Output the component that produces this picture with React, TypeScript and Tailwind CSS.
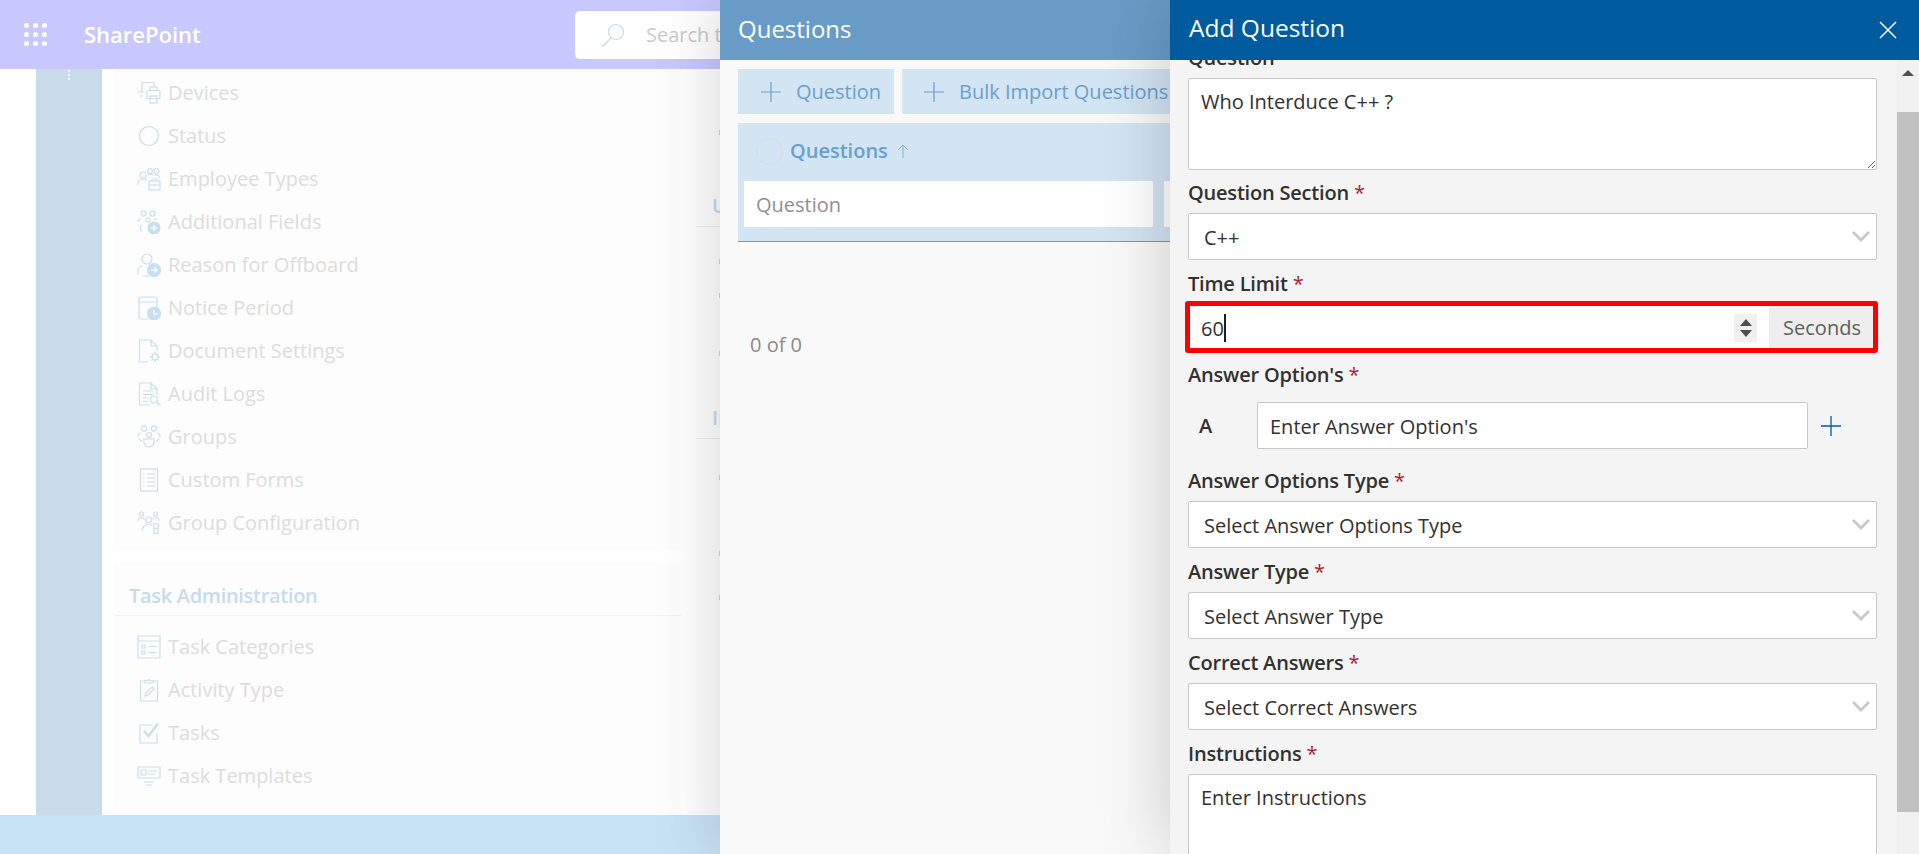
import type { ReactNode } from 'react';

const font = { fontFamily: '"Open Sans", "Noto Sans", sans-serif' };

function Icon({ children }: { children: ReactNode }) {
  return (
    <svg viewBox="0 0 24 24" className="h-6 w-6 shrink-0" fill="none" stroke="#c9deef" strokeWidth="1.2">
      {children}
    </svg>
  );
}

const firstGroup: [string, ReactNode][] = [
  ['Devices', <Icon><path d="M1 11h7M5 11V2.500a1 1 0 0 1 1-1h10a1 1 0 0 1 1 1V6M6 15H3" /><rect x="10" y="9.500" width="13" height="8" rx="1" /><rect x="13" y="6" width="7" height="3.500" /><rect x="13" y="15" width="7" height="7" /></Icon>],
  ['Status', <Icon><circle cx="12" cy="12" r="9.500" /></Icon>],
  ['Employee Types', <Icon><circle cx="6" cy="8" r="3" /><circle cx="13" cy="4" r="2.400" /><circle cx="19.500" cy="4" r="2.400" /><path d="M1 18c0-4 2-6 5-6 2 0 3 .7 3.500 2M11 8c1-1 4-1 5 0M17 8c2-.6 5 0 6 3" /><rect x="12" y="14" width="11" height="9" /><path d="M15 14v-2h5v2M12 18h11M17.500 17v2" /></Icon>],
  ['Additional Fields', <Icon><circle cx="6.500" cy="3.500" r="2.600" /><circle cx="15.500" cy="3.500" r="2.600" /><circle cx="11" cy="10" r="2.200" /><path d="M1 12c0-2 1.500-3 3-3M17 9h3M5 21c-2-2-2-4-1-6" /><circle cx="17" cy="18" r="6" fill="#c9deef" /><path d="M17 15v6M14 18h6" stroke="#fdfdfd" strokeWidth="1.500" /></Icon>],
  ['Reason for Offboard', <Icon><circle cx="10" cy="6" r="5" /><path d="M1 22c-1-5 1-9 5-9.500M6 23h6" /><circle cx="17" cy="17" r="6.500" fill="#c9deef" /><path d="M14 17h6M17.500 14.500 20 17l-2.500 2.500" stroke="#fdfdfd" strokeWidth="1.300" /></Icon>],
  ['Notice Period', <Icon><path d="M11 23H4a2 2 0 0 1-2-2V3a2 2 0 0 1 2-2h14a2 2 0 0 1 2 2v8M2 6h18" /><circle cx="17" cy="17.500" r="6.500" fill="#c9deef" /><path d="M17 14v4h3.500" stroke="#fdfdfd" strokeWidth="1.300" /></Icon>],
  ['Document Settings', <Icon><path d="M11 23H2.500V1H14l6 6v5M14 1v6h6" /><circle cx="18" cy="18" r="3" /><path d="M18 13v2M18 21v2M13 18h2M21 18h2M14.500 14.500l1.400 1.400M20 20l1.500 1.500M21.500 14.500 20 16M16 20l-1.500 1.500" /></Icon>],
  ['Audit Logs', <Icon><path d="M12 23H2.500V1H14l6 6v6M14 1v6h6M6 9h10M6 12.500h10M6 16h5M6 19.500h5" /><circle cx="17" cy="17.500" r="3.500" /><path d="m19.500 20 4 3.500" /></Icon>],
  ['Groups', <Icon><circle cx="7" cy="3.500" r="2.600" /><circle cx="17" cy="3.500" r="2.600" /><circle cx="12" cy="10" r="2.500" /><path d="M1 12c0-2 1-4 3-4M23 12c0-2-1-4-3-4M2 13c.5 2 1.500 3 3 3.500M22 13c-.5 2-1.500 3-3 3.500M7 14h10v3a5 5 0 0 1-10 0z" /></Icon>],
  ['Custom Forms', <Icon><rect x="3.500" y="1" width="17" height="22" /><path d="M6 6h1.500M10 6h8M6 10h1.500M10 10h8M6 14h1.500M10 14h8M6 18h1.500M10 18h8" /></Icon>],
  ['Group Configuration', <Icon><circle cx="4.500" cy="3" r="2" /><circle cx="18.500" cy="3" r="2" /><circle cx="11.500" cy="9" r="3" /><path d="M1 10c0-2 1.500-3.500 3.500-3.500 1.500 0 2.500 1 3 2M22 10c0-2-1.500-3.500-3.500-3.500-1.500 0-2.500 1-3 2M5 20c0-4 3-6.500 6.500-6.500 1.500 0 2.500.4 3.500 1" /><circle cx="19" cy="15" r="2.500" /><path d="M17 17v6l2-1.500 2 1.500v-6" /></Icon>],
];

const secondGroup: [string, ReactNode][] = [
  ['Task Categories', <Icon><path d="M1 1h22v22H1zM1 6h22M5 10h3v3H5zM5 16h3v3H5zM11 11.500h9M11 17.500h9" /></Icon>],
  ['Activity Type', <Icon><path d="M8 3H3.500v20h17V3H16" /><path d="M8 5V2.500h3a1 1 0 0 1 2 0h3V5z" /><path d="m8 18 1-3 6-6 2 2-6 6z" /></Icon>],
  ['Tasks', <Icon><path d="M20 12v10H3V4h13" /><path d="m7 10 4.500 5L21 2.500" strokeWidth="2.600" /></Icon>],
  ['Task Templates', <Icon><path d="M1 3h22v11H1zM7 18h10M9 21h6" /><path d="M4 6h5v5H4zM11 7h9M11 10h7" /></Icon>],
];

function NavRow({ label, icon }: { label: string; icon: ReactNode }) {
  return (
    <div className="flex h-[43px] items-center gap-[7px] pl-[23px] text-[20px] text-[#dcdcdc]">
      {icon}
      <span>{label}</span>
    </div>
  );
}

function Tick({ className }: { className: string }) {
  return <div className={`h-[5px] w-px bg-[#d4d4d4] ${className}`} />;
}

function Backdrop() {
  return (
    <div className="flex h-full w-[720px] shrink-0 flex-col overflow-hidden bg-white">
      <header className="flex h-[69px] shrink-0 items-center bg-[#c8c8fe] pl-[24px]">
        <div className="grid w-[23px] shrink-0 grid-cols-3 gap-[4px]">
          {Array.from({ length: 9 }).map((_, i) => (
            <span key={i} className="h-[5px] w-[5px] rounded-full bg-white" />
          ))}
        </div>
        <span className="ml-[37px] w-[118px] shrink-0 text-[22px] font-semibold whitespace-nowrap text-white">SharePoint</span>
        <div className="ml-[373px] flex h-[48px] w-[300px] shrink-0 items-center rounded-[5px] bg-white pl-[26px] text-[20px] whitespace-nowrap text-[#c9c9c9]">
          <svg viewBox="0 0 24 24" className="h-6 w-6 shrink-0" fill="none" stroke="#c4daee" strokeWidth="1.200">
            <circle cx="15" cy="9" r="7.500" />
            <path d="M10 15 1 24" />
          </svg>
          <span className="ml-[21px]">Search this</span>
        </div>
      </header>

      <div className="flex min-h-0 flex-1">
        <div className="w-9 shrink-0 bg-white" />
        <aside className="flex w-[66px] shrink-0 flex-col items-center gap-[2px] bg-[#c7dbeb] pt-[1px]">
          <span className="h-[2px] w-[2px] bg-white" />
          <span className="h-[2px] w-[2px] bg-white" />
          <span className="h-[2px] w-[2px] bg-white" />
        </aside>
        <div className="w-3 shrink-0 bg-white" />

        <div className="flex w-[567px] shrink-0 flex-col">
          <div className="h-[481px] bg-[#fdfdfd] pt-[2px]">
            {firstGroup.map(([label, icon]) => (
              <NavRow key={label} label={label} icon={icon} />
            ))}
          </div>
          <div className="h-[13px] bg-white" />
          <div className="flex-1 bg-[#fdfdfd]">
            <div className="border-b border-[#f1f1f1] pt-[21px] pb-[7px] pl-[15px] text-[20px] leading-6 font-semibold tracking-[-0.015em] text-[#c7dbed]">
              Task Administration
            </div>
            <div className="pt-[9px]">
              {secondGroup.map(([label, icon]) => (
                <NavRow key={label} label={label} icon={icon} />
              ))}
            </div>
          </div>
        </div>

        <div className="ml-[15px] w-6 shrink-0 overflow-hidden whitespace-nowrap">
          <Tick className="mt-[61px] ml-[23px]" />
          <div className="mt-[59px] border-b border-[#eeeeee] pb-[8px] pl-[16px] text-[20px] leading-6 font-semibold text-[#c7dbed]">
            Users
          </div>
          <Tick className="mt-[32px] ml-[23px]" />
          <Tick className="mt-[29px] ml-[23px]" />
          <Tick className="mt-[53px] ml-[23px]" />
          <div className="mt-[50px] border-b border-[#eeeeee] pb-[8px] pl-[16px] text-[20px] leading-6 font-semibold text-[#c7dbed]">
            Integrations
          </div>
          <Tick className="mt-[36px] ml-[23px]" />
          <Tick className="mt-[71px] ml-[23px]" />
          <Tick className="mt-[39px] ml-[23px]" />
        </div>
      </div>

      <footer className="h-[39px] shrink-0 bg-[#c7e2f5]" />
    </div>
  );
}

function PlusLabel({ label, className }: { label: string; className: string }) {
  return (
    <div className={`flex h-[45px] shrink-0 items-center bg-[#d3e4f3] text-[20px] text-[#6a9fcb] ${className}`}>
      <svg viewBox="0 0 20 20" className="h-5 w-5 shrink-0" stroke="#6a9fcb" strokeWidth="1.200">
        <path d="M10 0v20M0 10h20" />
      </svg>
      <span className="ml-[15px] whitespace-nowrap">{label}</span>
    </div>
  );
}

function QuestionsPanel() {
  return (
    <section className="relative z-10 flex h-full w-[450px] shrink-0 flex-col overflow-hidden bg-[#f9f9f9] shadow-[0_0_60px_rgba(0,0,0,0.18)]">
      <div className="flex h-[60px] shrink-0 items-center bg-[#689cc7] pb-[3px] pl-[18px] text-[24px] text-white">
        Questions
      </div>
      <div className="flex gap-2 pt-[9px] pl-[18px]">
        <PlusLabel label="Question" className="w-[156px] pl-[23px]" />
        <PlusLabel label="Bulk Import Questions" className="w-[300px] pl-[22px]" />
      </div>
      <div className="mt-[9px] ml-[18px] h-[119px] w-[440px] shrink-0 border-b border-[#6a9ec8] bg-[#d3e4f3]">
        <div className="flex h-[56px] items-center pl-[18px]">
          <span className="h-[27px] w-[27px] shrink-0 rounded-full border border-[#dedcda]" />
          <span className="ml-[7px] text-[20px] font-semibold text-[#6a9fcb]">Questions</span>
          <svg viewBox="0 0 12 14" className="ml-[9px] h-[14px] w-3" fill="none" stroke="#86afd2" strokeWidth="1">
            <path d="M6 14V1M1 6l5-5 5 5" />
          </svg>
        </div>
        <div className="mt-[2px] flex gap-[11px] pl-[6px]">
          <div className="flex h-[46px] w-[409px] shrink-0 items-center bg-white pt-[2px] pl-3 text-[20px] text-[#8f8f8f]">
            Question
          </div>
          <div className="h-[46px] w-[40px] shrink-0 bg-white" />
        </div>
      </div>
      <div className="mt-[88px] pl-[30px] text-[20px] text-[#8a8a8a]">0 of 0</div>
    </section>
  );
}

function Label({ children }: { children: ReactNode }) {
  return (
    <div className="mb-[7px] h-[26px] text-[20px] leading-[26px] font-semibold tracking-[-0.01em] whitespace-nowrap text-[#323130]">
      {children} <span className="font-normal text-[#a4262c]">*</span>
    </div>
  );
}

function SelectBox({ value }: { value: string }) {
  return (
    <div className="relative flex h-[47px] items-center rounded-[2px] border border-[#c8c8c8] bg-white pt-[3px] pl-[15px] text-[20px] text-[#323130]">
      <span>{value}</span>
      <svg viewBox="0 0 18 11" className="absolute top-[17px] right-[6px] h-[11px] w-[18px]" fill="none" stroke="#c8c8c8" strokeWidth="2.800">
        <path d="m1 1 8 8 8-8" />
      </svg>
    </div>
  );
}

function AddQuestionPanel() {
  const areaClass =
    'block w-full rounded-[2px] border border-[#c8c8c8] bg-white px-3 pt-[10px] text-[20px] leading-[26px] text-[#323130] outline-none placeholder:text-[#323130]';

  return (
    <section className="relative z-20 flex h-full w-[749px] shrink-0 flex-col bg-[#f4f4f4] shadow-[0_0_70px_rgba(0,0,0,0.2)]">
      <div className="relative z-10 flex h-[60px] shrink-0 items-center justify-between bg-[#005a9e] pr-[22px] pl-[19px] text-white">
        <span className="pb-[3px] text-[24.5px]">Add Question</span>
        <svg viewBox="0 0 18 18" className="h-[18px] w-[18px]" stroke="white" strokeWidth="1.500">
          <path d="m1 1 16 16M17 1 1 17" />
        </svg>
      </div>

      <div className="flex min-h-0 flex-1">
        <div className="min-w-0 flex-1 overflow-hidden pl-[18px]">
          <div className="-mt-[15px] w-[689px]">
            <Label>
              <span>Question</span>
            </Label>
            <textarea readOnly defaultValue="Who Interduce C++ ?" className={`${areaClass} h-[92px]`} />

            <div className="mt-[10px]">
              <Label>Question Section</Label>
              <SelectBox value="C++" />
            </div>

            <div className="mt-[11px]">
              <Label>Time Limit</Label>
              <div className="relative flex h-[47px] rounded-[2px] border border-[#c8c8c8] bg-white">
                <div className="flex flex-1 items-center pt-[2px] pl-3 text-[20px] text-[#323130]">
                  60
                  <span className="-mt-[2px] h-7 w-[2px] bg-[#201f1e]" />
                </div>
                <div className="my-auto mr-3 flex h-7 w-[23px] flex-col items-center justify-center gap-[4px] bg-[#f0f0f0]">
                  <span className="h-0 w-0 border-x-[6px] border-b-[7px] border-x-transparent border-b-[#505050]" />
                  <span className="h-0 w-0 border-x-[6px] border-t-[7px] border-x-transparent border-t-[#505050]" />
                </div>
                <div className="flex w-[107px] items-center justify-center bg-[#eeeeee] pr-px text-[20px] text-[#605e5c]">
                  Seconds
                </div>
                <div className="absolute -top-[4px] -right-[2px] -bottom-[3px] -left-[4px] rounded-[3px] border-[5px] border-[#ff0000]" />
              </div>
            </div>

            <div className="mt-[11px]">
              <Label>Answer Option's</Label>
              <div className="mt-[14px] flex h-[47px] items-center">
                <span className="w-[69px] pl-[11px] text-[20px] font-semibold text-[#323130]">A</span>
                <div className="flex h-full w-[551px] items-center rounded-[2px] border border-[#c8c8c8] bg-white pt-[3px] pl-3 text-[20px] text-[#323130]">
                  Enter Answer Option's
                </div>
                <svg viewBox="0 0 20 20" className="ml-[13px] h-5 w-5" stroke="#005a9e" strokeWidth="1.300">
                  <path d="M10 0v20M0 10h20" />
                </svg>
              </div>
            </div>

            <div className="mt-[19px]">
              <Label>Answer Options Type</Label>
              <SelectBox value="Select Answer Options Type" />
            </div>
            <div className="mt-[11px]">
              <Label>Answer Type</Label>
              <SelectBox value="Select Answer Type" />
            </div>
            <div className="mt-[11px]">
              <Label>Correct Answers</Label>
              <SelectBox value="Select Correct Answers" />
            </div>
            <div className="mt-[11px]">
              <Label>Instructions</Label>
              <textarea readOnly placeholder="Enter Instructions" className={`${areaClass} h-[110px]`} />
            </div>
          </div>
        </div>

        <div className="flex w-[22px] shrink-0 flex-col bg-[#f1f1f1]">
          <div className="flex h-[52px] shrink-0 justify-center pt-[10px]">
            <span className="h-0 w-0 border-x-[6px] border-b-[6px] border-x-transparent border-b-[#505050]" />
          </div>
          <div className="h-[700px] bg-[#c1c1c1]" />
        </div>
      </div>
    </section>
  );
}

export default function App() {
  return (
    <div className="flex h-screen w-full overflow-hidden bg-white" style={font}>
      <Backdrop />
      <QuestionsPanel />
      <AddQuestionPanel />
    </div>
  );
}
